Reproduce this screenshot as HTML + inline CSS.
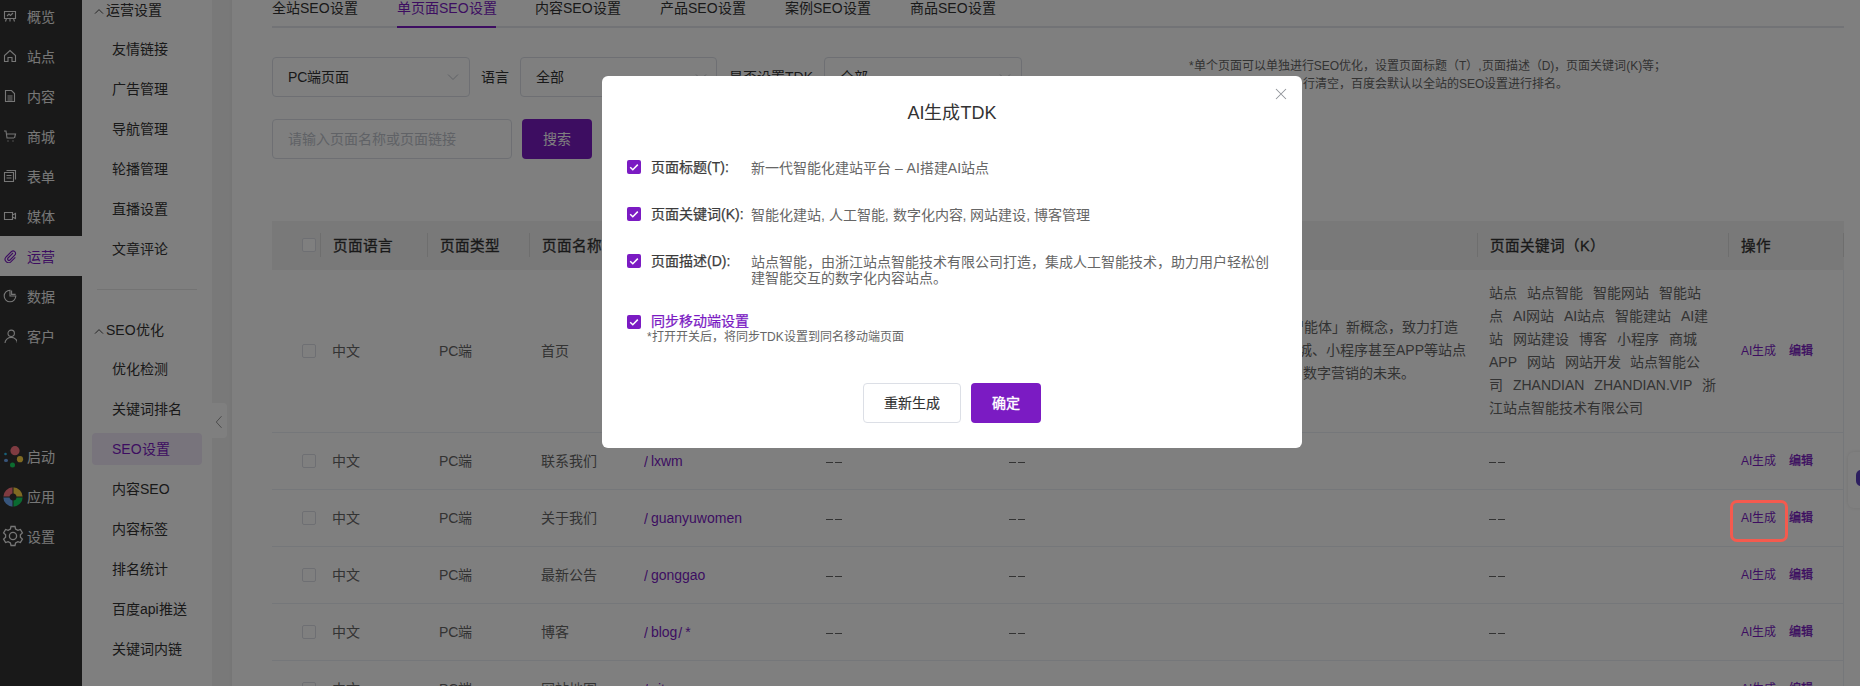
<!DOCTYPE html>
<html lang="zh-CN">
<head>
<meta charset="utf-8">
<style>
*{margin:0;padding:0;box-sizing:border-box;}
html,body{width:1860px;height:686px;overflow:hidden;background:#fff;}
body{font-family:"Liberation Sans",sans-serif;color:#333;position:relative;}
.a{position:absolute;white-space:nowrap;}
#s1{position:absolute;left:0;top:0;width:82px;height:686px;background:#333;}
#s1 .it{position:absolute;left:0;width:82px;height:40px;}
#s1 .it .t{position:absolute;left:27px;top:1px;line-height:40px;font-size:14px;color:#eee;}
#s1 .it svg{position:absolute;left:3px;top:13px;}
#s1 .on{background:#fff;}
#s1 .on .t{color:#7b1bc3;}
#s2{position:absolute;left:82px;top:0;width:130px;height:686px;background:#fff;}
#s2 .h{position:absolute;left:24px;font-size:14px;line-height:20px;color:#333;}
#s2 .i{position:absolute;left:30px;font-size:14px;line-height:20px;color:#333;}
#strip{position:absolute;left:212px;top:0;width:20px;height:686px;background:linear-gradient(to right,#f2f2f2 0,#f2f2f2 17px,#ebebeb 20px);}
#main{position:absolute;left:232px;top:0;width:1628px;height:686px;background:#fff;}
.tab{position:absolute;top:0;font-size:14px;line-height:17px;color:#333;}
.sel{position:absolute;top:57px;height:40px;border:1px solid #dcdfe6;border-radius:4px;background:#fff;}
.sel .v{position:absolute;left:15px;top:0;line-height:38px;font-size:14px;color:#333;}
.lbl{position:absolute;font-size:14px;line-height:20px;color:#333;}
.th{position:absolute;top:246px;margin-top:-10px;line-height:20px;font-size:14.6px;-webkit-text-stroke:0.3px currentColor;color:#333;}
.sep{position:absolute;top:233px;width:1px;height:24px;background:#dcdcdc;}
.td{position:absolute;font-size:14px;line-height:20px;color:#666;margin-top:-10px;}
.lk{color:#7b1bc3;}
.dsh{display:inline-block;width:7px;height:1.6px;background:#666;vertical-align:middle;position:relative;top:0px;}
.op{position:absolute;font-size:12px;line-height:20px;color:#7b1bc3;margin-top:-10px;}
.rl{position:absolute;left:272px;width:1572px;height:1px;background:#ebeef5;}
.cb{position:absolute;width:14px;height:14px;border:1px solid #dcdfe6;border-radius:2px;background:#fff;}
#mask{position:absolute;left:0;top:0;width:1860px;height:686px;background:rgba(0,0,0,.5);}
#modal{position:absolute;left:602px;top:76px;width:700px;height:372px;background:#fff;border-radius:6px;}
.mcb{position:absolute;left:25px;width:14px;height:14px;border-radius:2px;background:#7b1bc3;}
.mcb svg{position:absolute;left:0;top:0;}
.ml{position:absolute;left:49px;font-size:14px;line-height:20px;-webkit-text-stroke:0.25px currentColor;color:#3c3c3c;margin-top:-10px;}
.mv{position:absolute;left:149px;font-size:14px;line-height:16px;color:#666;margin-top:-8px;white-space:normal;width:530px;}
</style>
</head>
<body>
<div id="s1">
<div class="it" style="top:-4px"><svg width="14" height="14" viewBox="0 0 14 14" stroke="#eee" stroke-width="1.1"><path d="M1.5 2.5h11v7h-11z M3.5 9.5l-1 3 M10.5 9.5l1 3 M7 9.5v3 M4 7l2-2 1.5 1.5 2.5-2.5" fill="none"/></svg><span class="t">概览</span></div>
<div class="it" style="top:36px"><svg width="14" height="14" viewBox="0 0 14 14" stroke="#eee" stroke-width="1.1"><path d="M1.5 12.5v-6l5.5-5 5.5 5v6h-3.5v-4h-4v4z" fill="none"/></svg><span class="t">站点</span></div>
<div class="it" style="top:76px"><svg width="14" height="14" viewBox="0 0 14 14" stroke="#eee" stroke-width="1.1"><path d="M2.5 1.5h6l3 3v8h-9z M4.5 7h5 M4.5 9h5 M4.5 11h5" fill="none"/></svg><span class="t">内容</span></div>
<div class="it" style="top:116px"><svg width="14" height="14" viewBox="0 0 14 14" stroke="#eee" stroke-width="1.1"><path d="M1 2h2l1 7h7 M4 5h8.5l-1 4 M5 11.5v1 M10 11.5v1" fill="none"/></svg><span class="t">商城</span></div>
<div class="it" style="top:156px"><svg width="14" height="14" viewBox="0 0 14 14" stroke="#eee" stroke-width="1.1"><path d="M1.5 3.5h9v9h-9z M3.5 1.5h9v9 M3.5 6.5h5 M3.5 9h5" fill="none"/></svg><span class="t">表单</span></div>
<div class="it" style="top:196px"><svg width="14" height="14" viewBox="0 0 14 14" stroke="#eee" stroke-width="1.1"><path d="M1.5 3.5h8v7h-8z M9.5 6l3-1.5v5l-3-1.5" fill="none"/></svg><span class="t">媒体</span></div>
<div class="it on" style="top:236px"><svg width="14" height="14" viewBox="0 0 14 14" stroke="#7b1bc3" stroke-width="1.1"><path d="M10 4l-5 5a1.4 1.4 0 0 0 2 2l5-5a2.5 2.5 0 0 0-3.5-3.5l-5.5 5.5a3.4 3.4 0 0 0 4.8 4.8l4.5-4.5" fill="none"/></svg><span class="t">运营</span></div>
<div class="it" style="top:276px"><svg width="14" height="14" viewBox="0 0 14 14" stroke="#eee" stroke-width="1.1"><path d="M7 1.2A5.8 5.8 0 1 0 12.8 7H7z M8.6 1.4v4h4" fill="none"/></svg><span class="t">数据</span></div>
<div class="it" style="top:316px"><svg width="14" height="14" viewBox="0 0 14 14" stroke="#eee" stroke-width="1.1"><circle cx="8.2" cy="4.3" r="3.2" fill="none"/><path d="M2 14a6.2 5.6 0 0 1 12.4 0" fill="none"/></svg><span class="t">客户</span></div>
<div class="it" style="top:436px"><svg width="22" height="22" style="left:3px;top:10px" viewBox="0 0 22 22"><circle cx="12" cy="4.7" r="4.6" fill="#ff7682"/><circle cx="17" cy="13.2" r="3.1" fill="#ffd444"/><ellipse cx="3" cy="14.4" rx="2" ry="1.6" fill="#70a8f4"/><circle cx="2.5" cy="8" r="1.3" fill="#30c0f0"/><circle cx="9.5" cy="19" r="2.5" fill="#18d860"/></svg><span class="t">启动</span></div>
<div class="it" style="top:476px"><svg width="22" height="22" style="left:1.5px;top:9.5px" viewBox="0 0 22 22"><g fill="none" stroke-width="6.2"><path d="M4.4 11A6.6 6.6 0 0 1 11 4.4" stroke="#ff7682"/><path d="M11 4.4A6.6 6.6 0 0 1 17.6 11" stroke="#ffd444"/><path d="M17.6 11A6.6 6.6 0 0 1 11 17.6" stroke="#14d462"/><path d="M11 17.6A6.6 6.6 0 0 1 4.4 11" stroke="#6eaaf8"/></g><path d="M11 0v22M0 11h22" stroke="#333" stroke-width="1"/></svg><span class="t">应用</span></div>
<div class="it" style="top:516px"><svg width="22" height="22" style="left:2px;top:9px" viewBox="0 0 22 22" fill="none" stroke="#eee" stroke-width="1.3"><path d="M9 1.5h4l.6 2.6 2.3 1.3 2.5-.9 2 3.4-2 1.8v2.6l2 1.8-2 3.4-2.5-.9-2.3 1.3-.6 2.6H9l-.6-2.6-2.3-1.3-2.5.9-2-3.4 2-1.8V9.7l-2-1.8 2-3.4 2.5.9 2.3-1.3z"/><circle cx="11" cy="11" r="3.6"/></svg><span class="t">设置</span></div>
</div>
<div id="s2">
<svg class="a" style="left:12px;top:8px" width="10" height="7" viewBox="0 0 10 7" fill="none" stroke="#333" stroke-width="0.9"><path d="M1 5.6l4-4 4 4"/></svg><span class="h" style="top:0px">运营设置</span>
<span class="i" style="top:39px">友情链接</span>
<span class="i" style="top:79px">广告管理</span>
<span class="i" style="top:119px">导航管理</span>
<span class="i" style="top:159px">轮播管理</span>
<span class="i" style="top:199px">直播设置</span>
<span class="i" style="top:239px">文章评论</span>
<div class="a" style="left:15px;top:289px;width:100px;height:1px;background:#e6e6e6"></div>
<svg class="a" style="left:12px;top:328px" width="10" height="7" viewBox="0 0 10 7" fill="none" stroke="#333" stroke-width="0.9"><path d="M1 5.6l4-4 4 4"/></svg><span class="h" style="top:320px">SEO优化</span>
<div class="a" style="left:10px;top:433px;width:110px;height:32px;background:#f1e8f9;border-radius:4px"></div>
<span class="i" style="top:359px">优化检测</span>
<span class="i" style="top:399px">关键词排名</span>
<span class="i" style="top:439px;color:#7b1bc3">SEO设置</span>
<span class="i" style="top:479px">内容SEO</span>
<span class="i" style="top:519px">内容标签</span>
<span class="i" style="top:559px">排名统计</span>
<span class="i" style="top:599px">百度api推送</span>
<span class="i" style="top:639px">关键词内链</span>
</div>
<div id="strip"></div>
<div id="main"></div>
<span class="tab" style="left:272px;">全站SEO设置</span>
<span class="tab" style="left:397px;color:#7b1bc3">单页面SEO设置</span>
<span class="tab" style="left:535px;">内容SEO设置</span>
<span class="tab" style="left:660px;">产品SEO设置</span>
<span class="tab" style="left:785px;">案例SEO设置</span>
<span class="tab" style="left:910px;">商品SEO设置</span>
<div class="a" style="left:272px;top:26px;width:1572px;height:2px;background:#e4e7ed"></div>
<div class="a" style="left:397px;top:26px;width:99px;height:2px;background:#7b1bc3"></div>
<div class="sel" style="left:272px;width:198px"><span class="v">PC端页面</span></div><svg class="a" style="left:447px;top:73px" width="12" height="8" viewBox="0 0 12 8" fill="none" stroke="#c0c4cc" stroke-width="1"><path d="M1 1.5l5 5 5-5"/></svg>
<span class="lbl" style="left:481px;top:67px">语言</span>
<div class="sel" style="left:520px;width:197px"><span class="v">全部</span></div><svg class="a" style="left:695px;top:73px" width="12" height="8" viewBox="0 0 12 8" fill="none" stroke="#c0c4cc" stroke-width="1"><path d="M1 1.5l5 5 5-5"/></svg>
<span class="lbl" style="left:729px;top:67px">是否设置TDK</span>
<div class="sel" style="left:824px;width:198px"><span class="v">全部</span></div><svg class="a" style="left:999px;top:73px" width="12" height="8" viewBox="0 0 12 8" fill="none" stroke="#c0c4cc" stroke-width="1"><path d="M1 1.5l5 5 5-5"/></svg>
<div class="sel" style="left:272px;top:119px;width:240px"><span class="v" style="color:#c0c4cc">请输入页面名称或页面链接</span></div>
<div class="a" style="left:522px;top:119px;width:70px;height:40px;background:#7b1bc3;border-radius:4px;color:#fff;font-size:14px;line-height:40px;text-align:center">搜索</div>
<div class="a" style="left:1189px;top:57px;font-size:12px;line-height:18px;color:#666">*单个页面可以单独进行SEO优化，设置页面标题（T）,页面描述（D)，页面关键词(K)等；</div>
<div class="a" style="left:1303px;top:75px;font-size:12px;line-height:18px;color:#666">行清空，百度会默认以全站的SEO设置进行排名。</div>
<div class="a" style="left:272px;top:221px;width:1572px;height:49px;background:#f2f2f2"></div>
<div class="cb" style="left:302px;top:238px"></div>
<div class="sep" style="left:320px"></div>
<div class="sep" style="left:427px"></div>
<div class="sep" style="left:529px"></div>
<div class="sep" style="left:630px"></div>
<div class="sep" style="left:813px"></div>
<div class="sep" style="left:997px"></div>
<div class="sep" style="left:1477px"></div>
<div class="sep" style="left:1728px"></div>
<div class="sep" style="left:1843px"></div>
<span class="th a" style="left:333px">页面语言</span>
<span class="th a" style="left:440px">页面类型</span>
<span class="th a" style="left:542px">页面名称</span>
<span class="th a" style="left:643px">页面链接</span>
<span class="th a" style="left:826px">页面标题（T）</span>
<span class="th a" style="left:1010px">页面描述（D）</span>
<span class="th a" style="left:1490px">页面关键词（K）</span>
<span class="th a" style="left:1741px">操作</span>
<div class="cb" style="left:302px;top:344px"></div>
<span class="td a" style="left:332px;top:351px">中文</span>
<span class="td a" style="left:439px;top:351px">PC端</span>
<span class="td a" style="left:541px;top:351px">首页</span>
<span class="td a lk" style="left:643px;top:351px"><span style="display:inline-block;transform:scaleY(1.1);margin-left:1px;margin-right:3px">/</span></span>
<span class="op a" style="left:1741px;top:351px">AI生成</span><span class="op a" style="left:1789px;top:351px;-webkit-text-stroke:0.3px currentColor">编辑</span>
<div class="cb" style="left:302px;top:454px"></div>
<span class="td a" style="left:332px;top:461px">中文</span>
<span class="td a" style="left:439px;top:461px">PC端</span>
<span class="td a" style="left:541px;top:461px">联系我们</span>
<span class="td a lk" style="left:643px;top:461px"><span style="display:inline-block;transform:scaleY(1.1);margin-left:1px;margin-right:3px">/</span>lxwm</span>
<span class="td a" style="left:826px;top:461px"><i class="dsh"></i><i class="dsh" style="margin-left:1.5px"></i></span>
<span class="td a" style="left:1009px;top:461px"><i class="dsh"></i><i class="dsh" style="margin-left:1.5px"></i></span>
<span class="td a" style="left:1489px;top:461px"><i class="dsh"></i><i class="dsh" style="margin-left:1.5px"></i></span>
<span class="op a" style="left:1741px;top:461px">AI生成</span><span class="op a" style="left:1789px;top:461px;-webkit-text-stroke:0.3px currentColor">编辑</span>
<div class="cb" style="left:302px;top:511px"></div>
<span class="td a" style="left:332px;top:518px">中文</span>
<span class="td a" style="left:439px;top:518px">PC端</span>
<span class="td a" style="left:541px;top:518px">关于我们</span>
<span class="td a lk" style="left:643px;top:518px"><span style="display:inline-block;transform:scaleY(1.1);margin-left:1px;margin-right:3px">/</span>guanyuwomen</span>
<span class="td a" style="left:826px;top:518px"><i class="dsh"></i><i class="dsh" style="margin-left:1.5px"></i></span>
<span class="td a" style="left:1009px;top:518px"><i class="dsh"></i><i class="dsh" style="margin-left:1.5px"></i></span>
<span class="td a" style="left:1489px;top:518px"><i class="dsh"></i><i class="dsh" style="margin-left:1.5px"></i></span>
<span class="op a" style="left:1741px;top:518px">AI生成</span><span class="op a" style="left:1789px;top:518px;-webkit-text-stroke:0.3px currentColor">编辑</span>
<div class="cb" style="left:302px;top:568px"></div>
<span class="td a" style="left:332px;top:575px">中文</span>
<span class="td a" style="left:439px;top:575px">PC端</span>
<span class="td a" style="left:541px;top:575px">最新公告</span>
<span class="td a lk" style="left:643px;top:575px"><span style="display:inline-block;transform:scaleY(1.1);margin-left:1px;margin-right:3px">/</span>gonggao</span>
<span class="td a" style="left:826px;top:575px"><i class="dsh"></i><i class="dsh" style="margin-left:1.5px"></i></span>
<span class="td a" style="left:1009px;top:575px"><i class="dsh"></i><i class="dsh" style="margin-left:1.5px"></i></span>
<span class="td a" style="left:1489px;top:575px"><i class="dsh"></i><i class="dsh" style="margin-left:1.5px"></i></span>
<span class="op a" style="left:1741px;top:575px">AI生成</span><span class="op a" style="left:1789px;top:575px;-webkit-text-stroke:0.3px currentColor">编辑</span>
<div class="cb" style="left:302px;top:625px"></div>
<span class="td a" style="left:332px;top:632px">中文</span>
<span class="td a" style="left:439px;top:632px">PC端</span>
<span class="td a" style="left:541px;top:632px">博客</span>
<span class="td a lk" style="left:643px;top:632px"><span style="display:inline-block;transform:scaleY(1.1);margin-left:1px;margin-right:3px">/</span>blog<span style="display:inline-block;transform:scaleY(1.1);margin-left:1px;margin-right:3px">/</span>*</span>
<span class="td a" style="left:826px;top:632px"><i class="dsh"></i><i class="dsh" style="margin-left:1.5px"></i></span>
<span class="td a" style="left:1009px;top:632px"><i class="dsh"></i><i class="dsh" style="margin-left:1.5px"></i></span>
<span class="td a" style="left:1489px;top:632px"><i class="dsh"></i><i class="dsh" style="margin-left:1.5px"></i></span>
<span class="op a" style="left:1741px;top:632px">AI生成</span><span class="op a" style="left:1789px;top:632px;-webkit-text-stroke:0.3px currentColor">编辑</span>
<div class="cb" style="left:302px;top:682px"></div>
<span class="td a" style="left:332px;top:689px">中文</span>
<span class="td a" style="left:439px;top:689px">PC端</span>
<span class="td a" style="left:541px;top:689px">网站地图</span>
<span class="td a lk" style="left:643px;top:689px"><span style="display:inline-block;transform:scaleY(1.1);margin-left:1px;margin-right:3px">/</span>sitemap</span>
<span class="td a" style="left:826px;top:689px"><i class="dsh"></i><i class="dsh" style="margin-left:1.5px"></i></span>
<span class="td a" style="left:1009px;top:689px"><i class="dsh"></i><i class="dsh" style="margin-left:1.5px"></i></span>
<span class="td a" style="left:1489px;top:689px"><i class="dsh"></i><i class="dsh" style="margin-left:1.5px"></i></span>
<span class="op a" style="left:1741px;top:689px">AI生成</span><span class="op a" style="left:1789px;top:689px;-webkit-text-stroke:0.3px currentColor">编辑</span>
<div class="rl" style="top:432px"></div>
<div class="rl" style="top:489px"></div>
<div class="rl" style="top:546px"></div>
<div class="rl" style="top:603px"></div>
<div class="rl" style="top:660px"></div>
<div class="a" style="left:1843px;top:270px;width:1px;height:416px;background:#ebeef5"></div>
<div class="a" style="left:1010px;top:316px;width:448px;font-size:14px;line-height:23px;color:#666;text-align:right">智能技术有限公司打造，以「智能体」新概念，致力打造</div>
<div class="a" style="left:1010px;top:339px;width:456px;font-size:14px;line-height:23px;color:#666;text-align:right">助力用户轻松创建网站、商城、小程序甚至APP等站点</div>
<div class="a" style="left:1010px;top:362px;width:405px;font-size:14px;line-height:23px;color:#666;text-align:right">智能交互的内容站点，开启数字营销的未来。</div>
<div class="a" style="left:1489px;top:282px;font-size:14px;line-height:23px;color:#666;word-spacing:6px">站点 站点智能 智能网站 智能站<br>点 AI网站 AI站点 智能建站 AI建<br>站 网站建设 博客 小程序 商城<br>APP 网站 网站开发 站点智能公<br>司 ZHANDIAN ZHANDIAN.VIP 浙<br>江站点智能技术有限公司</div>
<div class="a" style="left:212px;top:403px;width:15px;height:35px;background:#fff;border-radius:0 4px 4px 0"></div><svg class="a" style="left:215px;top:415px" width="8" height="14" viewBox="0 0 8 14" fill="none" stroke="#999" stroke-width="1"><path d="M6.5 1.2l-5.2 5.8 5.2 5.8"/></svg>
<div class="a" style="left:1848px;top:452px;width:40px;height:56px;background:#fff;border-radius:6px;box-shadow:0 0 4px rgba(0,0,0,.1)"></div><div class="a" style="left:1856px;top:470px;width:10px;height:16px;background:#5a3fc0;border-radius:5px"></div>
<div id="mask"></div>
<div id="modal">
<div class="a" style="left:0;top:26px;width:700px;text-align:center;font-size:18px;line-height:22px;color:#333">AI生成TDK</div>
<svg class="a" style="left:673px;top:12px" width="12" height="12" viewBox="0 0 12 12" fill="none" stroke="#909399" stroke-width="1.05"><path d="M1 1l10 10M11 1L1 11"/></svg>
<div class="mcb" style="top:84px"><svg width="14" height="14" viewBox="0 0 14 14" fill="none" stroke="#fff" stroke-width="1.5"><path d="M3.2 7.2l2.6 2.5 5-5.1"/></svg></div>
<span class="ml a" style="top:91px">页面标题(T):</span>
<div class="mv a" style="top:92px">新一代智能化建站平台 – AI搭建AI站点</div>
<div class="mcb" style="top:131px"><svg width="14" height="14" viewBox="0 0 14 14" fill="none" stroke="#fff" stroke-width="1.5"><path d="M3.2 7.2l2.6 2.5 5-5.1"/></svg></div>
<span class="ml a" style="top:138px">页面关键词(K):</span>
<div class="mv a" style="top:139px">智能化建站, 人工智能, 数字化内容, 网站建设, 博客管理</div>
<div class="mcb" style="top:178px"><svg width="14" height="14" viewBox="0 0 14 14" fill="none" stroke="#fff" stroke-width="1.5"><path d="M3.2 7.2l2.6 2.5 5-5.1"/></svg></div>
<span class="ml a" style="top:185px">页面描述(D):</span>
<div class="mv a" style="top:186px">站点智能，由浙江站点智能技术有限公司打造，集成人工智能技术，助力用户轻松创建智能交互的数字化内容站点。</div>
<div class="mcb" style="top:239px"><svg width="14" height="14" viewBox="0 0 14 14" fill="none" stroke="#fff" stroke-width="1.5"><path d="M3.2 7.2l2.6 2.5 5-5.1"/></svg></div>
<span class="ml a" style="top:245px;color:#7b1bc3">同步移动端设置</span>
<span class="a" style="left:45px;top:253px;font-size:12px;line-height:16px;color:#666">*打开开关后，将同步TDK设置到同名移动端页面</span>
<div class="a" style="left:261px;top:307px;width:98px;height:40px;border:1px solid #dcdfe6;border-radius:4px;font-size:14px;line-height:38px;text-align:center;color:#333;-webkit-text-stroke:0.15px #333">重新生成</div>
<div class="a" style="left:369px;top:307px;width:70px;height:40px;background:#7b1bc3;border-radius:4px;font-size:14px;line-height:40px;text-align:center;color:#fff;-webkit-text-stroke:0.4px #fff">确定</div>
</div>
<div class="a" style="left:1730px;top:500px;width:58px;height:42px;border:3px solid #f55a4e;border-radius:7px"></div>
</body>
</html>
